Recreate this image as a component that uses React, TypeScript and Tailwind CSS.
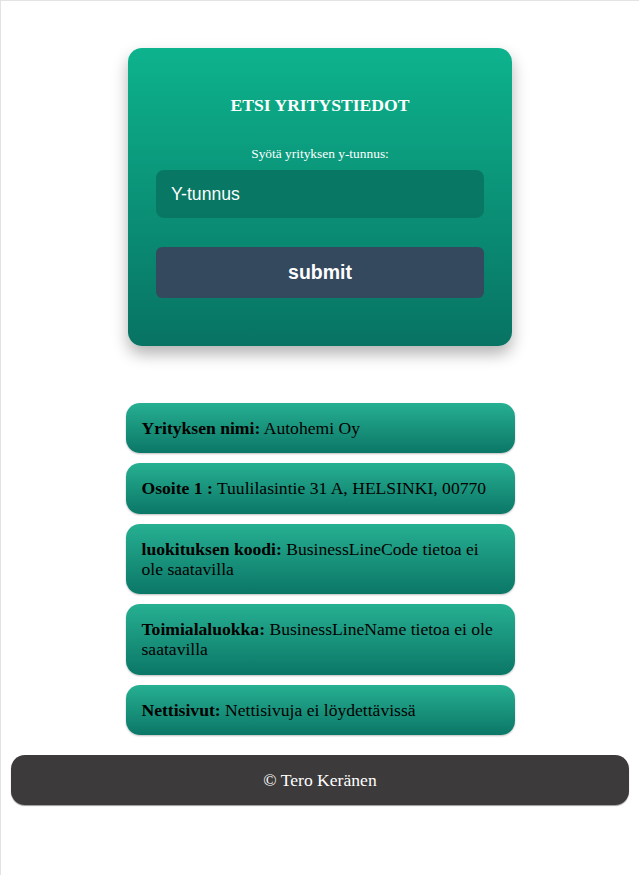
const results = [
  { label: "Yrityksen nimi:", value: "Autohemi Oy" },
  { label: "Osoite 1 :", value: "Tuulilasintie 31 A, HELSINKI, 00770" },
  { label: "luokituksen koodi:", value: "BusinessLineCode tietoa ei ole saatavilla" },
  { label: "Toimialaluokka:", value: "BusinessLineName tietoa ei ole saatavilla" },
  { label: "Nettisivut:", value: "Nettisivuja ei löydettävissä" },
];

export default function App() {
  return (
    <div className="min-h-[875px] border-t border-l border-[#e3e3e3] bg-white font-['Liberation_Serif','Times_New_Roman',serif]">
      <form
        onSubmit={(e) => e.preventDefault()}
        className="mx-auto mt-[47px] flex w-[384px] flex-col rounded-[14px] bg-gradient-to-b from-[#0db38d] to-[#087363] px-[28px] pb-[48px] shadow-[0_8px_16px_rgba(0,0,0,0.3)]"
      >
        <h2 className="mt-[47px] text-center text-[17.6px] leading-[20px] font-bold text-white">
          ETSI YRITYSTIEDOT
        </h2>
        <label
          htmlFor="ytunnus"
          className="mt-[31px] text-center text-[13.4px] leading-[15px] text-white"
        >
          Syötä yrityksen y-tunnus:
        </label>
        <input
          id="ytunnus"
          type="text"
          placeholder="Y-tunnus"
          className="mt-[9px] h-[48px] rounded-[8px] bg-[#08715f]/80 px-[15px] font-['Liberation_Sans',Arial,sans-serif] text-[17.6px] text-white outline-none placeholder:text-white"
        />
        <button
          type="submit"
          className="mt-[29px] h-[51px] rounded-[6px] bg-[#34495e] font-['Liberation_Sans',Arial,sans-serif] text-[19.5px] font-bold text-white"
        >
          submit
        </button>
      </form>

      <div className="mx-auto mt-[57px] flex w-[389px] flex-col gap-[10px]">
        {results.map((r) => (
          <div
            key={r.label}
            className="rounded-[14px] bg-gradient-to-b from-[#26b092] to-[#0b7767] px-[16px] py-[15px] text-[17.6px] leading-[20.3px] text-black shadow-[0_1px_2px_rgba(0,0,0,0.25)]"
          >
            <b>{r.label}</b> {r.value}
          </div>
        ))}
      </div>

      <footer className="mx-[10px] mt-[20px] rounded-[14px] bg-[#3d3a3b] py-[15px] text-center text-[17.6px] leading-[20px] text-white shadow-[0_1px_1px_rgba(0,0,0,0.4)]">
        © Tero Keränen
      </footer>
    </div>
  );
}
